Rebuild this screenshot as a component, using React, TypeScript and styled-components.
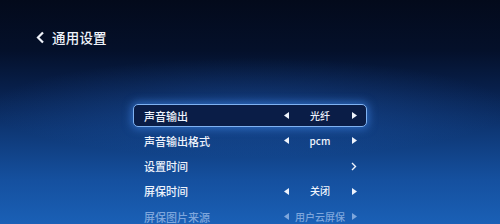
import styled, { createGlobalStyle } from "styled-components";

const GlobalStyle = createGlobalStyle`
  html, body {
    margin: 0;
    padding: 0;
  }
  body {
    font-family: "Noto Sans CJK SC", "Noto Sans", sans-serif;
  }
`;

const Screen = styled.div`
  width: 500px;
  height: 224px;
  overflow: hidden;
  display: flex;
  flex-direction: column;
  background:
    radial-gradient(ellipse 260px 50px at 250px 108px, rgba(40, 110, 210, 0.3), rgba(40, 110, 210, 0) 100%),
    linear-gradient(
      180deg,
      #030a1b 0px,
      #04102a 50px,
      #08204c 90px,
      #0e3775 130px,
      #15509f 180px,
      #1a60b6 224px
    );
`;

const Header = styled.div`
  display: flex;
  align-items: center;
  gap: 7px;
  padding: 27px 0 0 36px;
  height: 20px;
  color: #eef2fa;
`;

const Title = styled.span`
  font-size: 13.5px;
  font-weight: 500;
  letter-spacing: 0.2px;
  line-height: 20px;
`;

const List = styled.div`
  width: 234px;
  margin: 57px auto 0;
  display: flex;
  flex-direction: column;
  gap: 2.3px;
`;

const Row = styled.div<{ $active?: boolean; $dim?: boolean }>`
  box-sizing: border-box;
  height: 23px;
  display: flex;
  align-items: center;
  justify-content: space-between;
  padding: 0 5px 0 10px;
  border-radius: 5px;
  color: ${(p) => (p.$dim ? "#7ea6dc" : "#eef3fc")};
  border: 1.5px solid ${(p) => (p.$active ? "#7fb2f2" : "transparent")};
  background: ${(p) => (p.$active ? "#0a1d47" : "transparent")};
  box-shadow: ${(p) =>
    p.$active ? "0 0 8px 2px rgba(70, 140, 240, 0.55)" : "none"};
`;

const Label = styled.span`
  font-size: 11px;
  font-weight: 500;
  line-height: 20px;
`;

const Control = styled.div`
  width: 82px;
  display: grid;
  grid-template-columns: 14px 1fr 14px;
  align-items: center;
  justify-items: center;
`;

const Value = styled.span`
  font-size: 10px;
  font-weight: 500;
  line-height: 20px;
  white-space: nowrap;
`;

const Arrow = ({ dir }: { dir: "left" | "right" }) => (
  <svg width="5" height="7" viewBox="0 0 5 7">
    {dir === "left" ? (
      <polygon points="5,0 5,7 0,3.5" fill="currentColor" />
    ) : (
      <polygon points="0,0 0,7 5,3.5" fill="currentColor" />
    )}
  </svg>
);

const Chevron = () => (
  <svg width="6" height="9" viewBox="0 0 6 9">
    <polyline
      points="1,1 4.5,4.5 1,8"
      fill="none"
      stroke="currentColor"
      strokeWidth="1.4"
    />
  </svg>
);

type Item = {
  label: string;
  value?: string;
  link?: boolean;
  active?: boolean;
  dim?: boolean;
};

const items: Item[] = [
  { label: "声音输出", value: "光纤", active: true },
  { label: "声音输出格式", value: "pcm" },
  { label: "设置时间", link: true },
  { label: "屏保时间", value: "关闭" },
  { label: "屏保图片来源", value: "用户云屏保", dim: true },
];

export default function App() {
  return (
    <>
      <GlobalStyle />
      <Screen>
        <Header>
          <svg width="9" height="13" viewBox="0 0 9 13">
            <polyline
              points="7,1.5 2,6.5 7,11.5"
              fill="none"
              stroke="#eef2fa"
              strokeWidth="2.2"
            />
          </svg>
          <Title>通用设置</Title>
        </Header>
        <List>
          {items.map((it) => (
            <Row key={it.label} $active={it.active} $dim={it.dim}>
              <Label>{it.label}</Label>
              <Control>
                {it.link ? (
                  <>
                    <span />
                    <span />
                    <Chevron />
                  </>
                ) : (
                  <>
                    <Arrow dir="left" />
                    <Value>{it.value}</Value>
                    <Arrow dir="right" />
                  </>
                )}
              </Control>
            </Row>
          ))}
        </List>
      </Screen>
    </>
  );
}
